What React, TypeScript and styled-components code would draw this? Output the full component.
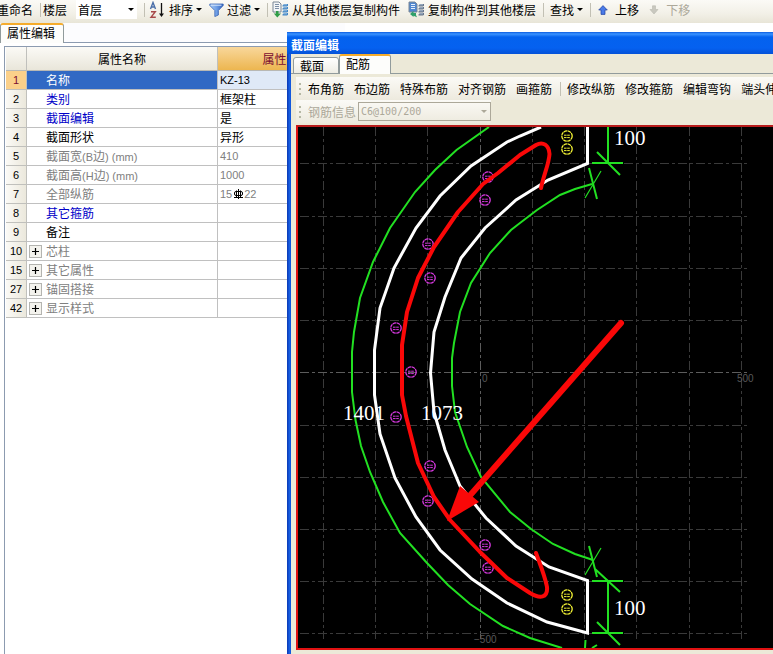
import React, { useState } from "react";
import styled, { createGlobalStyle, css } from "styled-components";

const GlobalStyle = createGlobalStyle`
  * { box-sizing: border-box; }
  html, body { margin: 0; padding: 0; }
  body {
    background: #ffffff;
    color: #000000;
    font: 12px/16px "Noto Sans CJK SC", sans-serif;
    overflow: hidden;
  }
  button, select {
    font: inherit;
    color: inherit;
    margin: 0;
    padding: 0;
    border: 0;
    background: none;
    white-space: nowrap;
  }
`;

const Screen = styled.div`
  position: relative;
  display: flex;
  flex-direction: column;
  height: 100vh;
  overflow: hidden;
`;

const MainBar = styled.header`
  display: flex;
  align-items: center;
  flex: none;
  height: 23px;
  padding-bottom: 4px;
  overflow: hidden;
  background: linear-gradient(#fbfaf6, #f2f0e7 60%, #e8e5d7);
`;

const ToolButton = styled.button<{ $gap?: number; $before?: number }>`
  display: flex;
  align-items: center;
  flex: none;
  gap: ${(p) => p.$gap ?? 3}px;
  margin-left: ${(p) => p.$before ?? 0}px;
  &:disabled { color: #aca899; }
`;

const Divider = styled.span<{ $before?: number; $after?: number }>`
  flex: none;
  width: 1px;
  height: 14px;
  margin: 0 ${(p) => p.$after ?? 4}px 0 ${(p) => p.$before ?? 7}px;
  background: #c2c0b4;
`;

const Caret = styled.span<{ $color?: string }>`
  width: 0;
  height: 0;
  border: 3px solid transparent;
  border-top-color: ${(p) => p.$color ?? "#000000"};
  border-bottom: 0;
`;

const FloorLabel = styled.label`
  display: flex;
  align-items: center;
  flex: none;
  gap: 9px;
`;

const SelectBox = styled.span<{ $framed?: boolean; $width: number }>`
  display: grid;
  align-items: center;
  width: ${(p) => p.$width}px;
  height: 19px;
  background: ${(p) => (p.$framed ? "transparent" : "#ffffff")};
  border: ${(p) => (p.$framed ? "1px solid #aca899" : "0")};
  > * { grid-area: 1 / 1; }
  > ${Caret} { justify-self: end; margin-right: 3px; pointer-events: none; }
`;

const Select = styled.select`
  appearance: none;
  width: 100%;
  padding-left: 2px;
  outline: 0;
  &:disabled { color: #aca899; opacity: 1; font: 10px/16px "DejaVu Sans Mono", monospace; }
`;

const SidePanel = styled.aside`
  display: flex;
  flex-direction: column;
  flex: 1;
  width: 345px;
  min-height: 0;
`;

const TabStrip = styled.div<{ $bg: string; $line: string }>`
  display: flex;
  align-items: flex-end;
  flex: none;
  height: 20px;
  background: linear-gradient(${(p) => p.$line}, ${(p) => p.$line}) bottom / 100% 1px no-repeat ${(p) => p.$bg};
`;

const Tab = styled.button<{ $active: boolean; $width: number }>`
  flex: none;
  width: ${(p) => p.$width}px;
  height: 17px;
  padding-left: 6px;
  text-align: left;
  line-height: 15px;
  border: 1px solid #919b9c;
  border-radius: 3px 3px 0 0;
  background: linear-gradient(#ffffff, #eeede4);
  ${(p) =>
    p.$active &&
    css`
      height: 20px;
      padding-bottom: 3px;
      border-bottom: 0;
      border-top: 2px solid #f5ac2c;
      background: #fdfdfb;
    `}
`;

const TableFrame = styled.div`
  flex: 1;
  min-height: 0;
  margin: 3px 0 0 4px;
  padding-left: 1px;
  border: 1px solid #8c9bb0;
  border-bottom: 0;
  background: #ffffff;
`;

const PropertyTable = styled.table`
  width: 100%;
  table-layout: fixed;
  border-collapse: separate;
  border-spacing: 0;
`;

const NumberCol = styled.col` width: 21px; `;
const NameCol = styled.col` width: 191px; `;

const HeadCell = styled.th<{ $accent?: boolean }>`
  height: 24px;
  padding: 0;
  font-weight: 400;
  color: ${(p) => (p.$accent ? "#7a0c30" : "#000000")};
  background: ${(p) => (p.$accent ? "linear-gradient(#f8d79b, #edb650)" : "linear-gradient(#fbfaf6, #e9e6da)")};
  border-right: 1px solid #c0c0bc;
  border-bottom: 1px solid #b8b8b4;
`;

const Cell = styled.td<{ $selected?: boolean }>`
  height: 19px;
  padding: 0 2px;
  border-right: 1px solid #c0c0c0;
  border-bottom: 1px solid #c0c0c0;
  background: ${(p) => (p.$selected ? "#dfe9f7" : "#ffffff")};
  white-space: nowrap;
`;

const IndexCell = styled.th<{ $selected: boolean }>`
  height: 19px;
  padding: 0;
  font: 11px/16px "Liberation Sans", sans-serif;
  border-right: 1px solid #c0c0bc;
  border-bottom: 1px solid #c0c0bc;
  color: ${(p) => (p.$selected ? "#7a0c30" : "#000000")};
  background: ${(p) => (p.$selected ? "#fbd08a" : "linear-gradient(90deg, #fbfaf6, #ebe8dc)")};
`;

type Tone = "selected" | "link" | "plain" | "muted";
const toneColor: Record<Tone, string> = {
  selected: "#ffffff",
  link: "#0000c8",
  plain: "#000000",
  muted: "#808080",
};

const NameCell = styled(Cell)<{ $tone: Tone }>`
  color: ${(p) => toneColor[p.$tone]};
  background: ${(p) => (p.$tone === "selected" ? "#3169c4" : "#ffffff")};
`;

const NameLine = styled.span`
  display: grid;
  grid-template-columns: 12px 1fr;
  grid-template-rows: 16px;
  column-gap: 5px;
  align-items: center;
`;

const ValueLine = styled.span<{ $muted: boolean }>`
  display: flex;
  align-items: center;
  height: 16px;
  color: ${(p) => (p.$muted ? "#808080" : "#000000")};
`;

const Latin = styled.span`
  font-family: "Liberation Sans", sans-serif;
  font-size: 11px;
  line-height: 12px;
`;

const Expander = styled.button`
  display: grid;
  place-items: center;
  width: 13px;
  height: 13px;
  color: #000000;
  background: #f4f3ee;
  border: 1px solid #b4b4b0;
`;

const Dialog = styled.section`
  position: absolute;
  top: 32px;
  right: 0;
  bottom: 0;
  left: 287px;
  display: flex;
  flex-direction: column;
  padding: 0 0 4px 4px;
  background: linear-gradient(90deg, #0a37b4, #1a66ea 3px, #0a4ad0 4px, #ece9d8 4px);
`;

const TitleBar = styled.h1`
  flex: none;
  height: 22px;
  margin: 0 0 0 -4px;
  padding: 4px 0 0 4px;
  font-size: 12px;
  line-height: 17px;
  font-weight: 700;
  color: #ffffff;
  background: linear-gradient(#0a5be0, #3a93ff 2px, #0462ee 5px, #0561f0 16px, #0452d8);
`;

const DialogTabs = styled(TabStrip)`
  padding-left: 2px;
`;

const ToolRows = styled.div`
  display: flex;
  flex-direction: column;
  flex: none;
  padding: 3px 0 2px 5px;
`;

const ToolRow = styled.div<{ $fit?: boolean }>`
  display: flex;
  align-items: center;
  align-self: ${(p) => (p.$fit ? "flex-start" : "stretch")};
  gap: ${(p) => (p.$fit ? 3 : 10)}px;
  height: 23px;
  padding-left: 3px;
  overflow: hidden;
  white-space: nowrap;
  background: linear-gradient(#fbfaf6, #edeade);
`;

const Grip = styled.span<{ $after: number }>`
  flex: none;
  width: 2px;
  height: 12px;
  margin-right: ${(p) => p.$after}px;
  background: repeating-linear-gradient(#b5b8a4 0 2px, transparent 2px 5px);
`;

const InfoLabel = styled.label`
  display: flex;
  align-items: center;
  gap: 2px;
  color: #aca899;
`;

const Canvas = styled.div`
  flex: 1;
  min-height: 0;
  margin-left: 5px;
  border: 2px solid #e01212;
  border-right: 0;
  border-top-color: #b81c1c;
  background: #000000;
`;

const Drawing = styled.svg`
  display: block;
  width: 100%;
  height: 100%;
`;

const Icon = styled.svg`
  display: block;
  flex: none;
`;

const SortIcon = () => (
  <Icon width="17" height="18" viewBox="0 0 17 18">
    <path d="M1.5 8 L4 1.5 L6.5 8 M2.5 6 H5.6" fill="none" stroke="#4a6ea8" strokeWidth="1.4" />
    <path d="M2 10.7 H6.3 L2 16.3 H6.8" fill="none" stroke="#a84a4a" strokeWidth="1.4" />
    <path d="M12.5 2 V14" stroke="#111" strokeWidth="1.3" />
    <path d="M10 12.5 H15 L12.5 16 Z" fill="#111" />
  </Icon>
);

const FilterIcon = () => (
  <Icon width="15" height="14" viewBox="0 0 15 14">
    <defs>
      <linearGradient id="funnel" x1="0" x2="1">
        <stop offset="0" stopColor="#a9cbf5" />
        <stop offset="0.5" stopColor="#6f9fe6" />
        <stop offset="1" stopColor="#2d5dbb" />
      </linearGradient>
    </defs>
    <path d="M0.8 1 H14.2 V2.5 L9.4 7.5 V12 L5.8 13.6 V7.5 L0.8 2.5 Z" fill="url(#funnel)" stroke="#3a66b5" strokeWidth="0.8" />
    <path d="M2 2.2 H12.5" stroke="#d7e7fb" />
  </Icon>
);

const CopyIcon = ({ mirrored }: { mirrored?: boolean }) => (
  <Icon width="17" height="17" viewBox="0 0 17 17">
    <path d="M1 1 H7 L9 3 V11 H1 Z" fill={mirrored ? "#4f86cf" : "#f4f6f8"} stroke="#7b8796" />
    <path d="M3 3.5 H7 M3 5.5 H7 M3 7.5 H7" stroke={mirrored ? "#e2eefc" : "#7d8fa6"} />
    {[3, 6, 9, 12].map((y) => (
      <g key={y}>
        <path d={`M10.5 ${y + 1.5} L12 ${y} H16 V${y + 1.8} L15 ${y + 2.6} H10.5 Z`} fill={mirrored ? "#66758a" : "#3f84c4"} />
        <path d={`M11.5 ${y + 0.8} H15`} stroke="#c7dcf0" strokeWidth="0.7" />
      </g>
    ))}
    {mirrored ? (
      <path d="M2 13 L5.5 10 V12 H8 V14 L9 16.3 L5.5 14.7 V16 Z" fill="#2fa06a" />
    ) : (
      <path d="M4 10 H6.5 V12.5 H9 L5.3 16.5 L1.8 12.5 H4 Z" fill="#2f9c48" />
    )}
  </Icon>
);

const MoveIcon = ({ down }: { down?: boolean }) => (
  <Icon width="10" height="10" viewBox="0 0 10 10">
    {down ? (
      <path d="M3.5 0.8 H6.5 V4.5 H9 L5 9 L1 4.5 H3.5 Z" fill="#c9c8bf" stroke="#b9b8ae" strokeWidth="0.6" />
    ) : (
      <path d="M5 0.6 L9.3 5 H7 V9.4 H3 V5 H0.7 Z" fill="#4b7be8" stroke="#1f3f9e" strokeWidth="0.7" />
    )}
  </Icon>
);

const PlusIcon = () => (
  <Icon width="9" height="9" viewBox="0 0 9 9">
    <path d="M1 4.5 H8 M4.5 1 V8" stroke="#000" strokeWidth="1.2" />
  </Icon>
);

const RebarIcon = () => (
  <Icon width="12" height="10" viewBox="0 0 12 10">
    <path d="M6.5 0 V10 M4.5 1.5 V8 M8.5 1.5 V8 M2 8.5 H11" stroke="#000" fill="none" />
    <rect x="2.5" y="2.5" width="8" height="4" rx="1.5" fill="none" stroke="#000" />
  </Icon>
);

interface Property {
  index: number;
  name: React.ReactNode;
  tone: Tone;
  value?: React.ReactNode;
  group?: boolean;
}

const properties: Property[] = [
  { index: 1, name: "名称", tone: "selected", value: <Latin>KZ-13</Latin> },
  { index: 2, name: "类别", tone: "link", value: "框架柱" },
  { index: 3, name: "截面编辑", tone: "link", value: "是" },
  { index: 4, name: "截面形状", tone: "plain", value: "异形" },
  { index: 5, name: <>截面宽<Latin>(B</Latin>边<Latin>) (mm)</Latin></>, tone: "muted", value: <Latin>410</Latin> },
  { index: 6, name: <>截面高<Latin>(H</Latin>边<Latin>) (mm)</Latin></>, tone: "muted", value: <Latin>1000</Latin> },
  { index: 7, name: "全部纵筋", tone: "muted", value: <><Latin>15</Latin><RebarIcon /><Latin>22</Latin></> },
  { index: 8, name: "其它箍筋", tone: "link" },
  { index: 9, name: "备注", tone: "plain" },
  { index: 10, name: "芯柱", tone: "muted", group: true },
  { index: 15, name: "其它属性", tone: "muted", group: true },
  { index: 27, name: "锚固搭接", tone: "muted", group: true },
  { index: 42, name: "显示样式", tone: "muted", group: true },
];

const columns = [323.5, 375.5, 427.5, 480.5, 532.5, 584.5, 636.5, 689.5, 741.5];
const rows = [163.5, 216.5, 268.5, 320.5, 372.5, 425.5, 477.5, 529.5, 581.5, 633.5];
const sideBars = [
  [488, 177], [485, 200], [428, 244], [430, 278], [396, 328], [411, 372],
  [396, 417], [430, 466], [428, 501], [485, 545], [488, 568],
];
const cornerBars = [[567, 136], [567, 149], [567, 595], [567, 609]];

const Bar = ({ x, y, color }: { x: number; y: number; color: string }) => (
  <g stroke={color} fill="none">
    <circle cx={x} cy={y} r="5.2" strokeWidth="1.3" strokeDasharray="3.6 0.5" />
    <path d={`M${x - 3} ${y - 0.8} H${x + 3} M${x - 3} ${y + 1.6} H${x + 3}`} strokeWidth="1" strokeDasharray="2.6 0.6" />
  </g>
);

const SectionDrawing = () => (
  <Drawing viewBox="298 127 475 521" preserveAspectRatio="xMinYMin slice" role="img" aria-label="截面配筋图">
    <g stroke="#3a3a3a" strokeDasharray="9 3 3 3">
      {columns.map((x) => (
        <path key={x} d={`M${x} 127 V639`} stroke={x === 480.5 ? "#5c5c5c" : undefined} />
      ))}
      {rows.map((y) => (
        <path key={y} d={`M300 ${y} H750`} stroke={y === 372.5 ? "#5c5c5c" : undefined} />
      ))}
    </g>
    <g fill="#585858" fontFamily="Liberation Sans, sans-serif" fontSize="10">
      <text x="482" y="382">0</text>
      <text x="737" y="382">500</text>
      <text x="474" y="643">−500</text>
    </g>
    <g fill="none" stroke="#22e022" strokeWidth="2">
      <path d="M489 127 L456.500 150 L435 170 L415 192 L390 228 L373 262 L360 298 L354 332 L352 352 V392 L355.500 420 L361 446 L370 472 L383 502 L400 533 L427 563 L448 585 L470 604 L503 626 L530 638 L562 648" />
      <path d="M592 184 L575 189 L560 195 L537 210 L520 223 L511 230 L490 253 L471 283 L460 312 L454 343 L452 358 V386 L455 412 L467 447 L481 477 L510 512 L531 529 L553 544 L575 554 L593 560" />
      <path d="M608 127 V163 M592 163 H623 M597 152 L620 175 M589 168 L597 199" />
      <path d="M592 581 H623 M595 569 L620 592 M608 581 V633 M592 633 H623 M597 622 L620 645 M589 546 L597 577" />
      <path d="M585.500 640 L585 648 M592 648 L597 645" />
      <path d="M601 171 L585 198 M601 548 L585 575" strokeWidth="1.200" />
    </g>
    <g fill="none" stroke="#ffffff" strokeWidth="3">
      <path d="M541 127 L520 136 L507 142 L471 166 L440 196 L416 228 L394 268 L380 308 L374.500 350 V395 L380 434 L395 478 L416 517 L440 550 L472 579 L507 603 L547 622 L587.500 633 V580.500 L549 567 L516 546 L486 518 L460 486 L445 450 L434 412 L430.500 373 L434 332 L445 297 L461 258 L485 228 L516 200 L548 180 L587.500 163.500 V127" />
    </g>
    {sideBars.map(([x, y]) => <Bar key={`${x}-${y}`} x={x} y={y} color="#d838e0" />)}
    {cornerBars.map(([x, y]) => <Bar key={`${x}-${y}`} x={x} y={y} color="#f4f434" />)}
    <path
      d="M541 188 C544 174 549 164 549.500 154 C549 145 543 141 536 145 L520 155 L498 173 L483 184 L458 212 L434 247 L418 278 L407 312 L402 345 V395 L406 416 L418 463 L434 497 L450 520 L480 552 L507 578 L530 593 C540 599 548 598 547 587 C545 576 540 564 536 553"
      fill="none" stroke="#fa0808" strokeWidth="4" strokeLinecap="round" strokeLinejoin="round"
    />
    <path d="M621 323 L466 500" stroke="#fa0808" strokeWidth="6" strokeLinecap="round" />
    <path d="M447 521 L460 486 L479 502 Z" fill="#fa0808" />
    <g fill="#ffffff" fontFamily="Liberation Serif, serif" fontSize="21">
      <text x="614" y="145">100</text>
      <text x="343" y="420">1401</text>
      <text x="421" y="420">1073</text>
      <text x="614" y="615">100</text>
    </g>
  </Drawing>
);

const PropertyEditor = () => (
  <SidePanel>
    <TabStrip role="tablist" $bg="#fcfcfe" $line="#8c9bb0">
      <Tab role="tab" aria-selected $active $width={64}>属性编辑</Tab>
    </TabStrip>
    <TableFrame>
      <PropertyTable>
        <colgroup><NumberCol /><NameCol /><col /></colgroup>
        <thead>
          <tr>
            <HeadCell />
            <HeadCell scope="col">属性名称</HeadCell>
            <HeadCell scope="col" $accent>属性值</HeadCell>
          </tr>
        </thead>
        <tbody>
          {properties.map((p) => {
            const selected = p.tone === "selected";
            return (
              <tr key={p.index}>
                <IndexCell scope="row" $selected={selected}>{p.index}</IndexCell>
                <NameCell $tone={p.tone}>
                  <NameLine>
                    {p.group ? <Expander aria-label="展开"><PlusIcon /></Expander> : <span />}
                    <span>{p.name}</span>
                  </NameLine>
                </NameCell>
                <Cell $selected={selected}>
                  <ValueLine $muted={p.tone === "muted"}>{p.value}</ValueLine>
                </Cell>
              </tr>
            );
          })}
        </tbody>
      </PropertyTable>
    </TableFrame>
  </SidePanel>
);

const SectionEditor = () => {
  const [tab, setTab] = useState("配筋");
  return (
    <Dialog role="dialog" aria-label="截面编辑">
      <TitleBar>截面编辑</TitleBar>
      <DialogTabs role="tablist" $bg="#ece9d8" $line="#919b9c">
        <Tab role="tab" aria-selected={tab === "截面"} $active={tab === "截面"} $width={46} onClick={() => setTab("截面")}>截面</Tab>
        <Tab role="tab" aria-selected={tab === "配筋"} $active={tab === "配筋"} $width={52} onClick={() => setTab("配筋")}>配筋</Tab>
      </DialogTabs>
      <ToolRows>
        <ToolRow>
          <Grip $after={-3} />
          {["布角筋", "布边筋", "特殊布筋", "对齐钢筋", "画箍筋"].map((t) => <ToolButton key={t}>{t}</ToolButton>)}
          <Divider $before={-2} $after={-4} />
          {["修改纵筋", "修改箍筋", "编辑弯钩", "端头伸缩"].map((t) => <ToolButton key={t}>{t}</ToolButton>)}
        </ToolRow>
        <ToolRow $fit>
          <Grip $after={4} />
          <InfoLabel>
            钢筋信息
            <SelectBox $framed $width={133}>
              <Select disabled defaultValue="a"><option value="a">C6@100/200</option></Select>
              <Caret $color="#aca899" />
            </SelectBox>
          </InfoLabel>
        </ToolRow>
      </ToolRows>
      <Canvas><SectionDrawing /></Canvas>
    </Dialog>
  );
};

export default function App() {
  return (
    <Screen>
      <GlobalStyle />
      <MainBar>
        <ToolButton $before={-3}>重命名</ToolButton>
        <Divider $after={2} />
        <FloorLabel>
          楼层
          <SelectBox $width={61}>
            <Select defaultValue="1"><option value="1">首层</option></Select>
            <Caret />
          </SelectBox>
        </FloorLabel>
        <Divider />
        <ToolButton><SortIcon />排序<Caret /></ToolButton>
        <ToolButton $before={7}><FilterIcon />过滤<Caret /></ToolButton>
        <Divider />
        <ToolButton><CopyIcon />从其他楼层复制构件</ToolButton>
        <ToolButton $before={8}><CopyIcon mirrored />复制构件到其他楼层</ToolButton>
        <Divider $after={6} />
        <ToolButton>查找<Caret /></ToolButton>
        <Divider $after={7} />
        <ToolButton $gap={7}><MoveIcon />上移</ToolButton>
        <ToolButton disabled $before={10} $gap={7}><MoveIcon down />下移</ToolButton>
      </MainBar>
      <PropertyEditor />
      <SectionEditor />
    </Screen>
  );
}
